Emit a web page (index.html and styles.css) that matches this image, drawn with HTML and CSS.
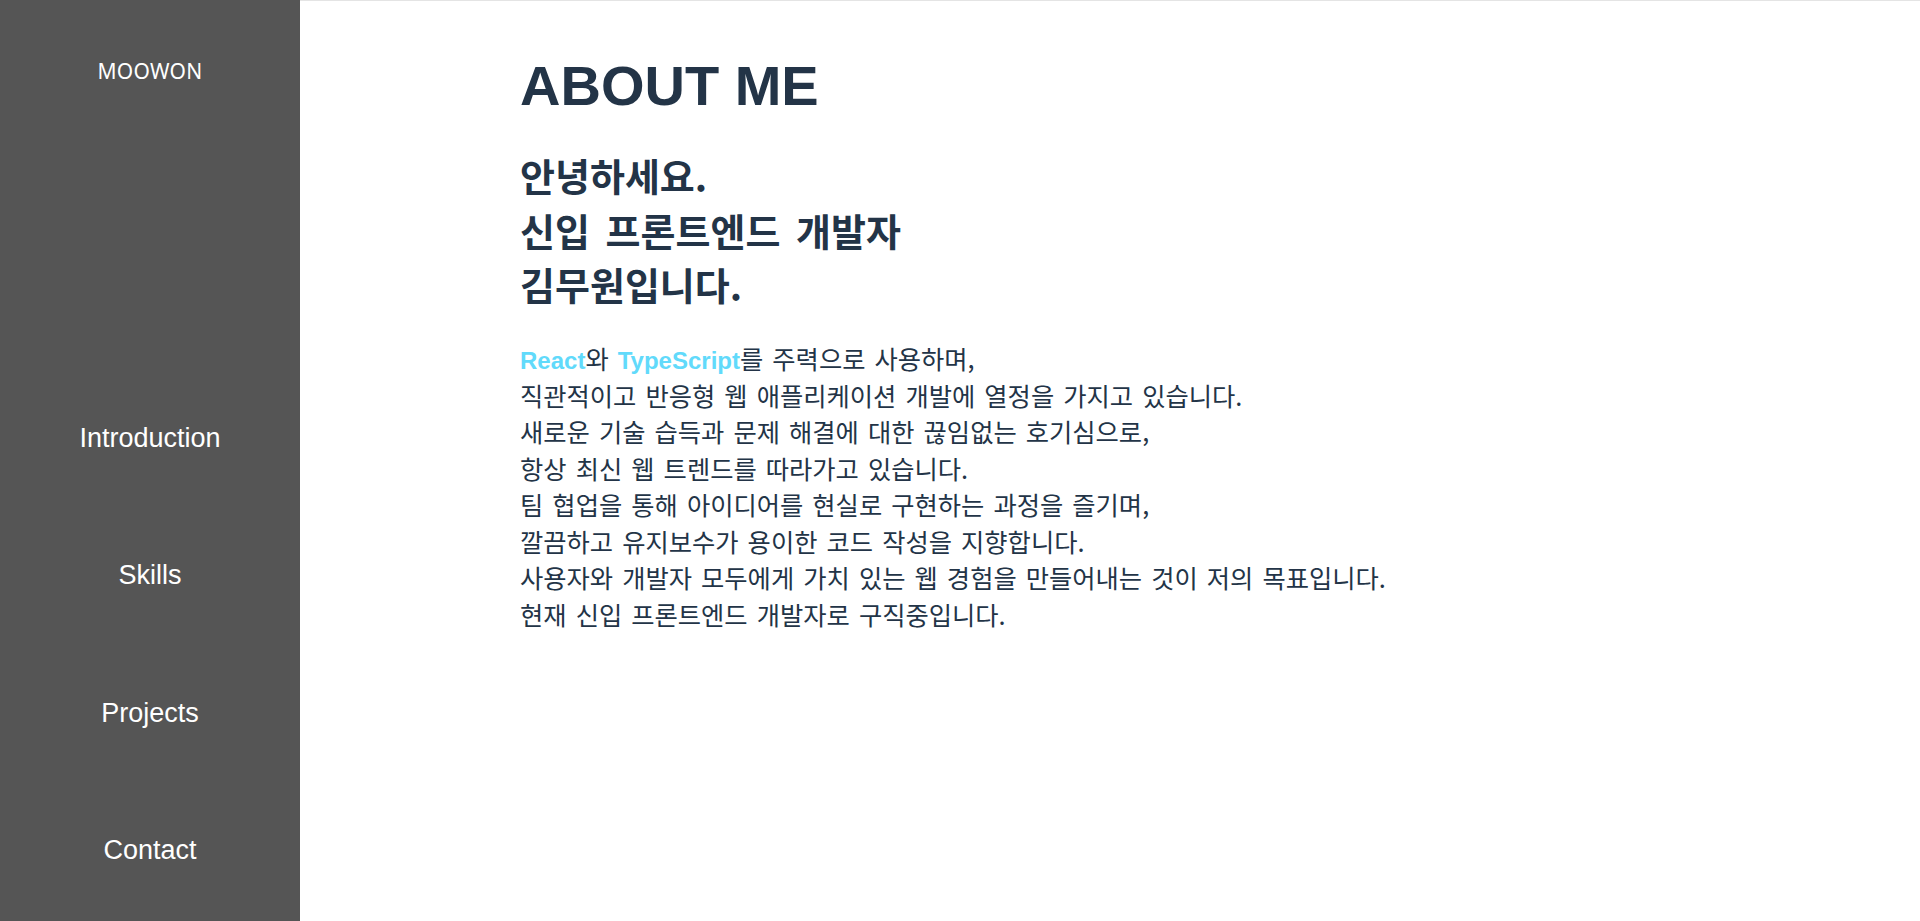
FILE: index.html
```html
<!DOCTYPE html>
<html lang="ko">
<head>
<meta charset="utf-8">
<title>MOOWON</title>
<link rel="stylesheet" href="styles.css">
</head>
<body>
<div class="layout">
  <aside class="sidebar">
    <div class="logo">MOOWON</div>
    <nav class="nav">
      <a class="nav-item" href="#intro">Introduction</a>
      <a class="nav-item" href="#skills">Skills</a>
      <a class="nav-item" href="#projects">Projects</a>
      <a class="nav-item" href="#contact">Contact</a>
    </nav>
  </aside>
  <main class="main">
    <section class="about">
      <h1 class="title">ABOUT ME</h1>
      <h2 class="greeting">안녕하세요.<br>신입 프론트엔드 개발자<br>김무원입니다.</h2>
      <p class="desc"><span class="tech">React</span>와 <span class="tech">TypeScript</span>를 주력으로 사용하며,<br>직관적이고 반응형 웹 애플리케이션 개발에 열정을 가지고 있습니다.<br>새로운 기술 습득과 문제 해결에 대한 끊임없는 호기심으로,<br>항상 최신 웹 트렌드를 따라가고 있습니다.<br>팀 협업을 통해 아이디어를 현실로 구현하는 과정을 즐기며,<br>깔끔하고 유지보수가 용이한 코드 작성을 지향합니다.<br>사용자와 개발자 모두에게 가치 있는 웹 경험을 만들어내는 것이 저의 목표입니다.<br>현재 신입 프론트엔드 개발자로 구직중입니다.</p>
    </section>
  </main>
</div>
</body>
</html>
```

FILE: styles.css
```css
html, body {
  margin: 0;
  padding: 0;
  height: 100%;
  background: #ffffff;
}

body {
  font-family: "Liberation Sans", Arial, "Noto Sans CJK KR", sans-serif;
  overflow: hidden;
}

.layout {
  display: flex;
  height: 100vh;
}

.sidebar {
  width: 300px;
  flex: 0 0 300px;
  background: #555555;
  display: flex;
  flex-direction: column;
  color: #ffffff;
  overflow: hidden;
}

.logo {
  padding-top: 57px;
  text-align: center;
  font-family: "Noto Sans", "Open Sans", sans-serif;
  font-size: 21px;
  letter-spacing: 0.3px;
  color: #ffffff;
}

.nav {
  margin-top: auto;
  margin-bottom: 1.5px;
  display: flex;
  flex-direction: column;
}

.nav-item {
  height: 137.5px;
  display: flex;
  align-items: center;
  justify-content: center;
  font-family: "Liberation Sans", Arial, sans-serif;
  font-size: 27px;
  color: #ffffff;
  text-decoration: none;
}

.main {
  flex: 1;
  border-top: 1px solid #e4e4e4;
  padding: 52px 0 0 220px;
}

.title {
  margin: 0;
  font-family: "Liberation Sans", Arial, sans-serif;
  font-size: 56px;
  font-weight: 700;
  color: #233447;
}

.greeting {
  margin: 30px 0 0;
  font-family: "Noto Sans CJK KR", sans-serif;
  font-size: 38px;
  line-height: 54.5px;
  font-weight: 700;
  word-spacing: 5px;
  color: #233447;
}

.desc {
  margin: 28.5px 0 0;
  font-family: "Noto Sans CJK KR", sans-serif;
  font-size: 25.3px;
  line-height: 36.5px;
  font-weight: 400;
  word-spacing: 2px;
  color: #233447;
}

.tech {
  font-family: "Liberation Sans", Arial, sans-serif;
  font-size: 24px;
  font-weight: 700;
  line-height: 1;
  word-spacing: 0;
  color: #61dafb;
}
```
